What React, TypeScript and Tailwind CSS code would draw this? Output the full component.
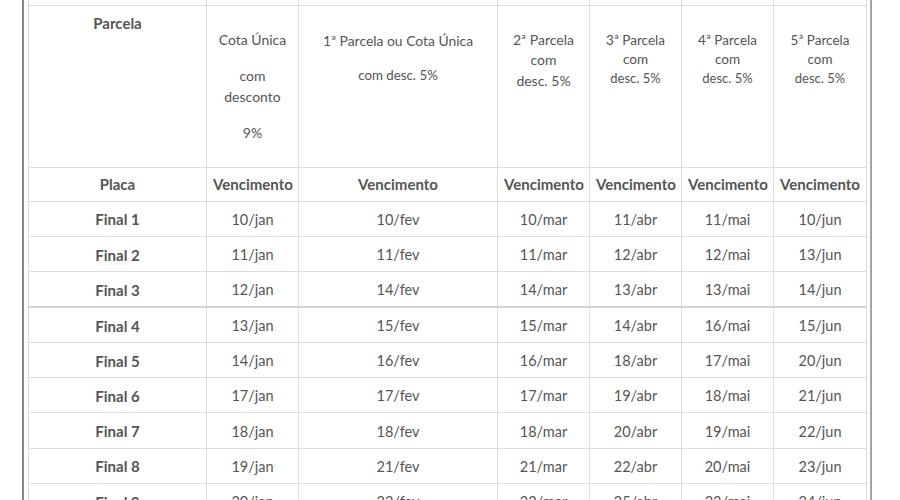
const rows: string[][] = [
  ['Final 1', '10/jan', '10/fev', '10/mar', '11/abr', '11/mai', '10/jun'],
  ['Final 2', '11/jan', '11/fev', '11/mar', '12/abr', '12/mai', '13/jun'],
  ['Final 3', '12/jan', '14/fev', '14/mar', '13/abr', '13/mai', '14/jun'],
  ['Final 4', '13/jan', '15/fev', '15/mar', '14/abr', '16/mai', '15/jun'],
  ['Final 5', '14/jan', '16/fev', '16/mar', '18/abr', '17/mai', '20/jun'],
  ['Final 6', '17/jan', '17/fev', '17/mar', '19/abr', '18/mai', '21/jun'],
  ['Final 7', '18/jan', '18/fev', '18/mar', '20/abr', '19/mai', '22/jun'],
  ['Final 8', '19/jan', '21/fev', '21/mar', '22/abr', '20/mai', '23/jun'],
  ['Final 9', '20/jan', '22/fev', '22/mar', '25/abr', '23/mai', '24/jun'],
];

const widths = ['w-[178px]', 'w-[92px]', 'w-[199px]', 'w-[92px]', 'w-[92px]', 'w-[92px]', 'w-[93px]'];

const cell = 'border border-[#dddddd] px-[6px] text-center';

export default function App() {
  return (
    <div
      className="h-[500px] overflow-hidden bg-white text-[#555555]"
      style={{ fontFamily: 'Lato, "Open Sans", sans-serif' }}
    >
      <div className="ml-[22px] w-[850px] border-l-2 border-r-2 border-l-[#88867c] border-r-[#a3a3a3] px-[4px]">
        <table className="w-[838px] table-fixed border-collapse text-[14.5px]">
          <colgroup>
            {widths.map((w, i) => (
              <col key={i} className={w} />
            ))}
          </colgroup>
          <tbody>
            <tr className="h-[5px]">
              {widths.map((_, i) => (
                <td key={i} className="border-x border-[#dddddd] p-0" />
              ))}
            </tr>
            <tr className="h-[162px] align-top">
              <td className={`${cell} pt-[7px] text-[15px] font-bold leading-[20px]`}>Parcela</td>
              <td className={`${cell} pt-[23px] text-[14px] leading-[21px]`}>
                <p>Cota Única</p>
                <p className="mt-[15px]">com<br />desconto</p>
                <p className="mt-[15px]">9%</p>
              </td>
              <td className={`${cell} pt-[24px] leading-[21px]`}>
                <p className="text-[13.9px]">1ª Parcela ou Cota Única</p>
                <p className="mt-[14px] text-[13.3px]">com desc. 5%</p>
              </td>
              <td className={`${cell} pt-[24px] text-[14px] leading-[20.5px]`}>
                2ª Parcela<br />com<br />desc. 5%
              </td>
              <td className={`${cell} pt-[25px] text-[13.5px] leading-[19px]`}>
                3ª Parcela<br />com<br /><span className="text-[13px]">desc. 5%</span>
              </td>
              <td className={`${cell} pt-[25px] text-[13.5px] leading-[19px]`}>
                4ª Parcela<br />com<br /><span className="text-[13px]">desc. 5%</span>
              </td>
              <td className={`${cell} pt-[25px] text-[13.5px] leading-[19px]`}>
                5ª Parcela<br />com<br /><span className="text-[13px]">desc. 5%</span>
              </td>
            </tr>
            <tr className="h-[34px] text-[15px] font-bold">
              <td className={cell}>Placa</td>
              {widths.slice(1).map((_, i) => (
                <td key={i} className={`${cell} px-[1px]`}>Vencimento</td>
              ))}
            </tr>
            {rows.map((r, ri) => (
              <tr key={r[0]} className={`h-[35.3px] ${ri === 3 ? 'border-t-2 border-t-[#d4d4d4]' : ''}`}>
                {r.map((v, i) => (
                  <td key={i} className={`${cell} pt-[2px] ${i === 0 ? 'text-[15px] font-bold' : ''}`}>
                    {v}
                  </td>
                ))}
              </tr>
            ))}
          </tbody>
        </table>
      </div>
    </div>
  );
}
